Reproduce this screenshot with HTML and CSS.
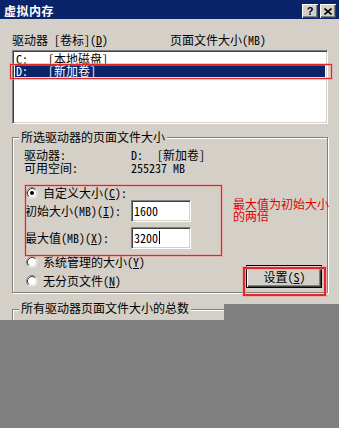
FILE: index.html
```html
<!DOCTYPE html>
<html lang="zh-CN">
<head>
<meta charset="utf-8">
<link rel="stylesheet" href="styles.css">
</head>
<body>
<div class="window">
  <div class="titlebar">
    <span class="title">虚拟内存</span>
    <div class="caption-btns">
      <span class="cbtn help">?</span>
      <span class="cbtn close"><svg width="8" height="7" viewBox="0 0 8 7"><path d="M0.5 0.5 L7.5 6.5 M7.5 0.5 L0.5 6.5" stroke="#000" stroke-width="1.6" fill="none"/></svg></span>
    </div>
  </div>
  <div class="content">
    <div class="list-head"><span class="col-drive">驱动器 [卷标](<u>D</u>)</span><span>页面文件大小(MB)</span></div>
    <div class="listbox">
      <div class="lrow"><span class="lc1">C:</span><span>[本地磁盘]</span></div>
      <div class="lrow sel"><span class="lc1">D:</span><span>[新加卷]</span></div>
    </div>

    <div class="group g1">
      <div class="legend">所选驱动器的页面文件大小</div>
      <div class="info first"><span class="ilabel">驱动器:</span><span class="ival"><span class="dl">D:</span>[新加卷]</span></div>
      <div class="info"><span class="ilabel">可用空间:</span><span class="ival">255237 MB</span></div>
      <div class="radio r-custom">
        <svg class="rb" width="12" height="12" viewBox="0 0 12 12"><circle cx="6" cy="6" r="5.5" fill="#fff"/><path d="M2.11 9.89 A5.5 5.5 0 0 1 9.89 2.11" stroke="#808080" fill="none"/><circle cx="6" cy="6" r="4.5" fill="#fff" stroke="#d4d0c8"/><path d="M2.82 9.18 A4.5 4.5 0 0 1 9.18 2.82" stroke="#404040" fill="none"/><circle cx="6" cy="6" r="2" fill="#000"/></svg>
        <span>自定义大小(<u>C</u>):</span>
      </div>
      <div class="field f-init"><span class="flabel">初始大小(MB)(<u>I</u>):</span><div class="input">1600</div></div>
      <div class="field f-max"><span class="flabel">最大值(MB)(<u>X</u>):</span><div class="input">3200<span class="caret"></span></div></div>
      <div class="bottom">
        <div class="radios">
          <div class="radio">
            <svg class="rb" width="12" height="12" viewBox="0 0 12 12"><circle cx="6" cy="6" r="5.5" fill="#fff"/><path d="M2.11 9.89 A5.5 5.5 0 0 1 9.89 2.11" stroke="#808080" fill="none"/><circle cx="6" cy="6" r="4.5" fill="#fff" stroke="#d4d0c8"/><path d="M2.82 9.18 A4.5 4.5 0 0 1 9.18 2.82" stroke="#404040" fill="none"/></svg>
            <span>系统管理的大小(<u>Y</u>)</span>
          </div>
          <div class="radio r-none">
            <svg class="rb" width="12" height="12" viewBox="0 0 12 12"><circle cx="6" cy="6" r="5.5" fill="#fff"/><path d="M2.11 9.89 A5.5 5.5 0 0 1 9.89 2.11" stroke="#808080" fill="none"/><circle cx="6" cy="6" r="4.5" fill="#fff" stroke="#d4d0c8"/><path d="M2.82 9.18 A4.5 4.5 0 0 1 9.18 2.82" stroke="#404040" fill="none"/></svg>
            <span>无分页文件(<u>N</u>)</span>
          </div>
        </div>
        <div class="btn">设置(<u>S</u>)</div>
      </div>
    </div>

    <div class="group g2">
      <div class="legend">所有驱动器页面文件大小的总数</div>
    </div>
  </div>

  <div class="mark mark-row"></div>
  <div class="mark mark-custom"></div>
  <div class="mark mark-btn"></div>
  <div class="note">最大值为初始大小<br>的两倍</div>
  <div class="shade shade-right"></div>
  <div class="shade shade-bottom"></div>
</div>
</body>
</html>
```

FILE: styles.css
```css
* { box-sizing: border-box; }
html, body { margin: 0; padding: 0; }
body {
  width: 339px;
  height: 428px;
  overflow: hidden;
  background: #d4d0c8;
  font-family: "Noto Sans Mono CJK SC", "Noto Sans CJK SC", monospace;
  font-size: 12px;
  line-height: 14px;
  color: #000;
}
u { text-decoration: underline; text-underline-offset: 1px; }
.window {
  position: relative;
  width: 339px;
  height: 428px;
}
.titlebar {
  height: 19px;
  background: #0a246a;
  display: flex;
  align-items: flex-start;
  justify-content: space-between;
  padding: 0 3px 0 4px;
}
.title {
  color: #fff;
  font-weight: bold;
  font-size: 12px;
  line-height: 14px;
  margin-top: 4px;
  letter-spacing: 0.5px;
}
.caption-btns {
  display: flex;
  gap: 2px;
  margin-top: 4px;
}
.cbtn {
  width: 16px;
  height: 14px;
  background: #d4d0c8;
  display: flex;
  align-items: center;
  justify-content: center;
  box-shadow: inset 1px 1px 0 #fff, inset -1px -1px 0 #404040, inset -2px -2px 0 #808080;
  font-family: "Liberation Sans", sans-serif;
  font-weight: bold;
  font-size: 11px;
  line-height: 12px;
}
.content {
  padding: 14px 11px 0 12px;
}
.list-head {
  display: flex;
  height: 14px;
}
.col-drive { width: 158px; }
.listbox {
  margin-top: 3px;
  height: 74px;
  background: #fff;
  border: 1px solid;
  border-color: #808080 #fff #fff #808080;
  box-shadow: inset 1px 1px 0 #404040, inset -1px -1px 0 #d4d0c8;
  padding: 2px 2px 0 2px;
}
.lrow {
  display: flex;
  height: 12px;
  line-height: 12px;
  padding-left: 1px;
}
.lrow.sel {
  background: #0a246a;
  color: #fff;
}
.lc1 { width: 32px; }
.group {
  border: 1px solid #808080;
  box-shadow: inset 1px 1px 0 #fff, 1px 1px 0 #fff;
}
.legend {
  width: max-content;
  background: #d4d0c8;
  padding: 0 2px;
  height: 14px;
}
.g1 {
  margin-top: 13px;
  padding: 0 5px 4px 11px;
}
.g1 .legend { margin: -8px 0 0 -5px; }
.info { display: flex; height: 13px; line-height: 13px; }
.info.first { margin-top: 4px; }
.ilabel { width: 107px; }
.dl { display: inline-block; width: 26px; }
.radio {
  display: flex;
  align-items: center;
  height: 14px;
  padding-left: 2px;
  gap: 5px;
}
.rb { flex: none; }
.r-custom { margin-top: 12px; }
.field {
  display: flex;
  align-items: center;
  height: 22px;
  padding-left: 1px;
}
.f-max { margin-top: 5px; }
.flabel { width: 106px; }
.input {
  width: 60px;
  height: 22px;
  background: #fff;
  border: 1px solid;
  border-color: #808080 #fff #fff #808080;
  box-shadow: inset 1px 1px 0 #404040, inset -1px -1px 0 #d4d0c8;
  padding: 3px 0 0 2px;
  display: flex;
  align-items: flex-start;
}
.caret {
  display: inline-block;
  width: 1px;
  height: 13px;
  background: #000;
  margin-left: 1px;
}
.bottom {
  display: flex;
  justify-content: space-between;
  align-items: flex-end;
  margin-top: 6px;
}
.radios {
  align-self: flex-start;
  display: flex;
  flex-direction: column;
  gap: 5px;
}
.btn {
  width: 76px;
  height: 23px;
  border: 1px solid #000;
  background: #d4d0c8;
  box-shadow: inset 1px 1px 0 #fff, inset -1px -1px 0 #404040, inset -2px -2px 0 #808080;
  display: flex;
  align-items: center;
  justify-content: center;
  padding-left: 1px;
}
.g2 {
  margin-top: 16px;
  height: 40px;
  padding-left: 11px;
}
.g2 .legend { margin: -9px 0 0 -5px; }

.mark {
  position: absolute;
  border: 1px solid #e02828;
  box-shadow: 0 0 0 1px rgba(240, 150, 150, 0.55), inset 0 0 0 1px rgba(240, 150, 150, 0.45);
}
.mark-row { left: 10px; top: 64px; width: 322px; height: 15px; }
.mark-custom { left: 25px; top: 185px; width: 197px; height: 71px; }
.mark-btn { left: 243px; top: 267px; width: 83px; height: 29px; border-width: 2px; }
.note {
  position: absolute;
  left: 233px;
  top: 198px;
  color: #e00000;
  font-size: 12px;
  line-height: 12px;
}
.shade { position: absolute; background: #808080; }
.shade-right { left: 224px; top: 304px; right: 0; bottom: 0; }
.shade-bottom { left: 0; top: 320px; right: 0; bottom: 0; }
```
